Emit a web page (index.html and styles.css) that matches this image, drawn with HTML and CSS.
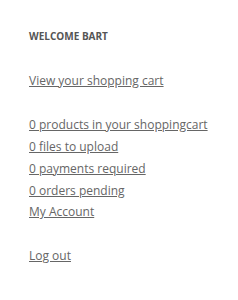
FILE: index.html
```html
<!DOCTYPE html>
<html>
<head>
<meta charset="utf-8">
<link rel="stylesheet" href="styles.css">
</head>
<body>
<div class="panel">
  <h3 class="title">WELCOME BART</h3>
  <ul class="group">
    <li><a href="#">View your shopping cart</a></li>
  </ul>
  <ul class="group">
    <li><a href="#">0 products in your shoppingcart</a></li>
    <li><a href="#">0 files to upload</a></li>
    <li><a href="#">0 payments required</a></li>
    <li><a href="#">0 orders pending</a></li>
    <li><a href="#">My Account</a></li>
  </ul>
  <ul class="group">
    <li><a href="#">Log out</a></li>
  </ul>
</div>
</body>
</html>
```
FILE: styles.css
```css
html, body {
  margin: 0;
  padding: 0;
  background: #fff;
}
.panel {
  padding: 29px 0 0 29px;
  font-family: "Open Sans", "Liberation Sans", sans-serif;
  color: #666;
}
.title {
  margin: 0 0 27px 0;
  font-size: 10px;
  line-height: 14px;
  font-weight: 700;
  color: #555;
}
.group {
  list-style: none;
  margin: 0 0 21.9px 0;
  padding: 0;
  font-size: 12px;
  line-height: 21.9px;
}
.group a {
  color: #666;
  text-decoration: underline;
}
```
